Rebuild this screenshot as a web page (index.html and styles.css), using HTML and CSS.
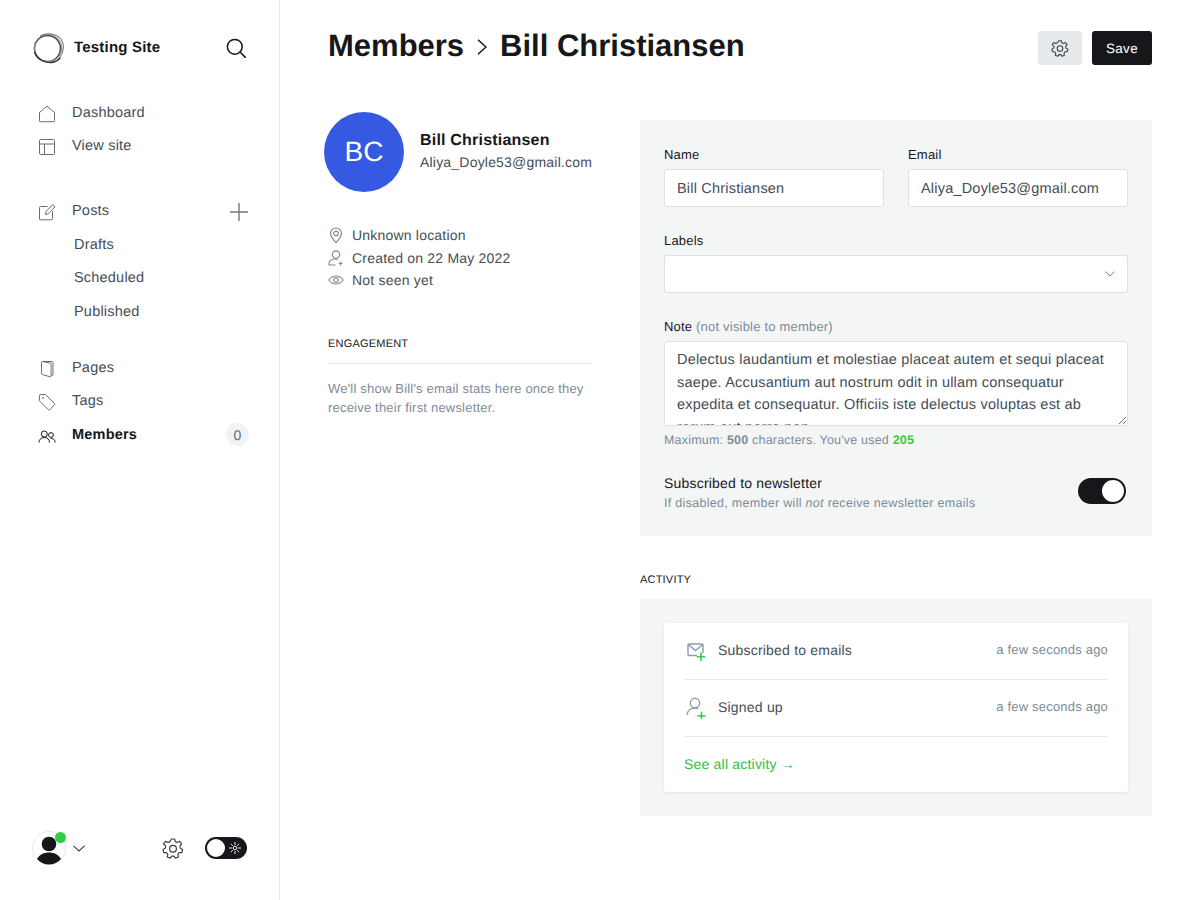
FILE: index.html
```html
<!DOCTYPE html>
<html lang="en">
<head>
    <meta charset="UTF-8">
    <meta name="viewport" content="width=device-width, initial-scale=1.0">
    <title>Members - Bill Christiansen</title>
    <link rel="stylesheet" href="styles.css">
</head>
<body>
    <div class="app">
        <aside class="sidebar">
            <div>
                <div class="brand">
                    <svg class="brand-logo" width="32" height="32" viewBox="0 0 32 32" fill="none">
                        <circle cx="15.500" cy="16.500" r="13" stroke="#4a4d50" stroke-width="1.600"/>
                        <circle cx="16" cy="16" r="13.800" stroke="#8d9093" stroke-width="1"/>
                        <path d="M8 4C14 0.500 24 1 29 7c3.500 5 3 13-1 18" stroke="#77797c" stroke-width="1.100"/>
                        <path d="M2.500 20c2 7 10 11 17 10.500 4-.5 7-2.500 9-5" stroke="#2f3235" stroke-width="1.300"/>
                    </svg>
                    <span class="brand-name">Testing Site</span>
                    <svg class="search-icon" width="20" height="20" viewBox="0 0 20 20" fill="none" stroke="#15171a" stroke-width="1.500">
                        <circle cx="8.800" cy="8.800" r="7.400"/>
                        <path d="M14 14l5.400 5.400" stroke-linecap="round"/>
                    </svg>
                </div>

                <nav class="nav-group nav-group-top">
                    <a class="nav-item">
                        <svg class="nav-icon" viewBox="0 0 18 18" fill="none"><path d="M1.500 7.500L9 1.200l7.500 6.300v8.300a.9.9 0 0 1-.9.9H2.400a.9.9 0 0 1-.9-.9z"/></svg>
                        Dashboard
                    </a>
                    <a class="nav-item">
                        <svg class="nav-icon" viewBox="0 0 18 18" fill="none"><rect x="1.500" y="1.500" width="15" height="15" rx="1"/><path d="M1.500 6h15M6.500 6v10.500"/></svg>
                        View site
                    </a>
                </nav>

                <nav class="nav-group nav-group-posts">
                    <a class="nav-item">
                        <svg class="nav-icon" viewBox="0 0 18 18" fill="none"><path d="M9.500 3.500H2.500a1 1 0 0 0-1 1v11.500a.8.800 0 0 0 .8.8h11.200a1 1 0 0 0 1-1V8.500"/><path d="M7.500 11.500l.6-3L14.600 1.600l2.400 2.200-6.600 7z"/></svg>
                        Posts
                        <svg class="plus-icon" width="18" height="18" viewBox="0 0 18 18" stroke="#6f7780" stroke-width="1.400"><path d="M9 0v18M0 9h18"/></svg>
                    </a>
                    <a class="nav-item nav-sub">Drafts</a>
                    <a class="nav-item nav-sub">Scheduled</a>
                    <a class="nav-item nav-sub">Published</a>
                </nav>

                <nav class="nav-group">
                    <a class="nav-item">
                        <svg class="nav-icon" viewBox="0 0 18 18" fill="none"><path d="M3.500 2.500a1 1 0 0 1 1-1h9.500a1 1 0 0 1 1 1v12a1 1 0 0 1-1 1h-.7"/><path d="M3.500 2.500v11a1 1 0 0 0 .8 1l7.800 2.300a.7.700 0 0 0 1-.7V4.200a1 1 0 0 0-.7-1L4.500 1.500"/></svg>
                        Pages
                    </a>
                    <a class="nav-item">
                        <svg class="nav-icon" viewBox="0 0 18 18" fill="none"><path d="M1.500 2.500a1 1 0 0 1 1-1h5l9 9a1 1 0 0 1 0 1.400l-4.800 4.800a1 1 0 0 1-1.400 0l-9-9z"/><circle cx="5" cy="5" r=".5"/></svg>
                        Tags
                    </a>
                    <a class="nav-item nav-active">
                        <svg class="nav-icon nav-icon-dark" viewBox="0 0 18 18" fill="none"><circle cx="6.300" cy="7" r="3"/><path d="M1 15.500c0-3 2.300-5 5.300-5s5.200 2 5.200 5"/><circle cx="13" cy="8" r="2.400"/><path d="M12.800 11.500c2.500-.3 4.300 1.300 4.400 4"/></svg>
                        Members
                        <span class="count-badge">0</span>
                    </a>
                </nav>
            </div>

            <div class="sidebar-footer">
                <div class="user-menu">
                    <div class="user-avatar">
                        <svg width="34" height="34" viewBox="0 0 34 34">
                            <circle cx="17" cy="13" r="7.300" fill="#15171a"/>
                            <path d="M5 28c2.500-4.500 7-6.500 12-6.500S26.500 23.500 29 28c-3 3.500-7 5.500-12 5.500S8 31.500 5 28z" fill="#15171a"/>
                        </svg>
                        <span class="user-dot"></span>
                    </div>
                    <svg width="12" height="7" viewBox="0 0 12 7" fill="none" stroke="#394047" stroke-width="1.100"><path d="M.5 .8L6 6l5.500-5.200"/></svg>
                </div>
                <div class="footer-actions">
                    <svg class="gear" width="22" height="22" viewBox="0 0 24 24" fill="none" stroke="#394047" stroke-width="1.300" stroke-linejoin="round">
                        <path d="M10.300 2.200h3.400l.7 2.800 2.200 1 2.600-1.300 2.200 2.800-1.800 2.300.4 2.400 2.500 1.400-.8 3.400-2.900.1-1.500 1.900.6 2.800-3.200 1.300-1.700-2.300h-2.400l-1.700 2.300-3.200-1.300.6-2.800-1.500-1.900-2.900-.1-.8-3.400 2.500-1.400.4-2.400L1.600 7.500l2.200-2.800 2.600 1.300 2.200-1z"/>
                        <circle cx="12" cy="12.800" r="3.700"/>
                    </svg>
                    <div class="theme-toggle">
                        <span class="theme-knob"></span>
                        <svg width="12" height="12" viewBox="0 0 12 12" stroke="#e6e8eb" stroke-width="1" fill="none"><circle cx="6" cy="6" r="1.800"/><path d="M6 0v3M6 9v3M0 6h3M9 6h3M1.800 1.800l2 2M8.200 8.200l2 2M1.800 10.200l2-2M8.200 3.800l2-2"/></svg>
                    </div>
                </div>
            </div>
        </aside>

        <main class="main">
            <header class="page-header">
                <h1 class="page-title">
                    Members
                    <svg width="10" height="16" viewBox="0 0 10 16" fill="none" stroke="#15171a" stroke-width="1.500"><path d="M1 .8L9 8l-8 7.200"/></svg>
                    Bill Christiansen
                </h1>
                <div class="header-actions">
                    <button class="btn btn-settings">
                        <svg width="18" height="18" viewBox="0 0 24 24" fill="none" stroke="#394047" stroke-width="1.400" stroke-linejoin="round">
                            <path d="M10.300 2.200h3.400l.7 2.800 2.200 1 2.600-1.300 2.200 2.800-1.800 2.300.4 2.400 2.500 1.400-.8 3.400-2.900.1-1.500 1.900.6 2.800-3.200 1.300-1.700-2.300h-2.400l-1.700 2.300-3.200-1.300.6-2.800-1.500-1.900-2.900-.1-.8-3.400 2.500-1.400.4-2.400L1.600 7.500l2.200-2.800 2.600 1.300 2.200-1z"/>
                            <circle cx="12" cy="12.800" r="3.700"/>
                        </svg>
                    </button>
                    <button class="btn btn-save">Save</button>
                </div>
            </header>

            <div class="columns">
                <section class="profile">
                    <div class="profile-head">
                        <div class="profile-avatar">BC</div>
                        <div>
                            <div class="profile-name">Bill Christiansen</div>
                            <div class="profile-email">Aliya_Doyle53@gmail.com</div>
                        </div>
                    </div>

                    <ul class="meta-list">
                        <li>
                            <svg class="meta-icon" viewBox="0 0 16 16" fill="none"><path d="M8 15.500C5 12.500 2.500 9.500 2.500 6.500a5.500 5.500 0 0 1 11 0c0 3-2.500 6-5.500 9z"/><circle cx="8" cy="6.500" r="2.300"/></svg>
                            Unknown location
                        </li>
                        <li>
                            <svg class="meta-icon" viewBox="0 0 16 16" fill="none"><circle cx="8" cy="4.500" r="3.700"/><path d="M1 15c-.5-3.500 2-6 5.500-6 1.200 0 2.300.2 3.300 .8M1 15h6.500M12.500 11.500v4M10.500 13.500h4"/></svg>
                            Created on 22 May 2022
                        </li>
                        <li>
                            <svg class="meta-icon" viewBox="0 0 16 16" fill="none"><path d="M.8 8C2.800 5.300 5.300 4 8 4s5.200 1.300 7.200 4c-2 2.700-4.500 4-7.200 4S2.800 10.700 .8 8z"/><circle cx="8" cy="8" r="2.200"/></svg>
                            Not seen yet
                        </li>
                    </ul>

                    <h4 class="section-heading engagement-heading">ENGAGEMENT</h4>
                    <p class="engagement-text">We'll show Bill's email stats here once they receive their first newsletter.</p>
                </section>

                <section class="details">
                    <div class="form-panel">
                        <div class="form-row">
                            <div class="field">
                                <label class="field-label">Name</label>
                                <input class="text-input" type="text" value="Bill Christiansen">
                            </div>
                            <div class="field">
                                <label class="field-label">Email</label>
                                <input class="text-input" type="text" value="Aliya_Doyle53@gmail.com">
                            </div>
                        </div>

                        <div class="field field-labels">
                            <label class="field-label">Labels</label>
                            <div class="select-input">
                                <svg width="10" height="6" viewBox="0 0 10 6" fill="none" stroke="#7c8b9a" stroke-width="1"><path d="M.5 .5L5 5 9.500 .5"/></svg>
                            </div>
                        </div>

                        <div class="field field-note">
                            <label class="field-label">Note <span class="label-hint">(not visible to member)</span></label>
                            <textarea class="note-input">Delectus laudantium et molestiae placeat autem et sequi placeat saepe. Accusantium aut nostrum odit in ullam consequatur expedita et consequatur. Officiis iste delectus voluptas est ab rerum aut porro non.</textarea>
                            <p class="note-count">Maximum: <b>500</b> characters. You've used <b class="count-used">205</b></p>
                        </div>

                        <div class="subscribe-row">
                            <div>
                                <div class="subscribe-title">Subscribed to newsletter</div>
                                <div class="subscribe-desc">If disabled, member will <em>not</em> receive newsletter emails</div>
                            </div>
                            <div class="switch"><span class="switch-knob"></span></div>
                        </div>
                    </div>

                    <h4 class="section-heading activity-heading">ACTIVITY</h4>
                    <div class="activity-panel">
                        <div class="activity-card">
                            <div class="activity-row">
                                <svg class="activity-icon" width="22" height="22" viewBox="0 0 22 22" fill="none">
                                    <path d="M13 12.500H5a1 1 0 0 1-1-1V2a1 1 0 0 1 1-1h13a1 1 0 0 1 1 1v8M4.300 1.500l7.200 6 7.200-6" stroke="#8e9cac" stroke-width="1.400"/>
                                    <path d="M17 9.500v8.600M12.700 13.700h8.600" stroke="#30cf43" stroke-width="1.600"/>
                                </svg>
                                <span class="activity-label">Subscribed to emails</span>
                                <span class="activity-time">a few seconds ago</span>
                            </div>
                            <div class="activity-row">
                                <svg class="activity-icon activity-icon-person" width="22" height="22" viewBox="0 0 22 22" fill="none">
                                    <circle cx="11" cy="6" r="4.700" stroke="#8e9cac" stroke-width="1.400"/>
                                    <path d="M3.200 18c0-4 3-7 7.800-7 1.300 0 2.300.2 3.200.6" stroke="#8e9cac" stroke-width="1.400"/>
                                    <path d="M17.500 14.700v7.300M13.200 19h8.400" stroke="#30cf43" stroke-width="1.600"/>
                                </svg>
                                <span class="activity-label">Signed up</span>
                                <span class="activity-time">a few seconds ago</span>
                            </div>
                            <a class="activity-link">See all activity &rarr;</a>
                        </div>
                    </div>
                </section>
            </div>
        </main>
    </div>
</body>
</html>
```

FILE: styles.css
```css
* {
    box-sizing: border-box;
}

body {
    margin: 0;
    font-family: "Liberation Sans", Arial, sans-serif;
    color: #15171a;
    background-color: #ffffff;
    letter-spacing: 0.2px;
    text-rendering: geometricPrecision;
}

.app {
    display: flex;
    height: 900px;
    overflow: hidden;
}

/* sidebar */
.sidebar {
    width: 280px;
    flex-shrink: 0;
    border-right: 1px solid #e6e8eb;
    padding: 32px 32px 35px 32px;
    display: flex;
    flex-direction: column;
    justify-content: space-between;
}

.brand {
    display: flex;
    align-items: center;
    height: 32px;
    margin-bottom: 32.200px;
}

.brand-logo {
    margin-right: 10px;
}

.brand-name {
    font-size: 15px;
    font-weight: bold;
    flex: 1;
    margin-top: -1px;
}

.search-icon {
    margin-right: 1px;
}

.nav-group {
    padding-left: 6px;
}

.nav-group-top {
    margin-bottom: 31.500px;
}

.nav-group-posts {
    margin-bottom: 22.500px;
}

.nav-item {
    display: flex;
    align-items: center;
    height: 33.500px;
    font-size: 14.500px;
    color: #464d54;
}

.nav-icon {
    width: 18px;
    height: 18px;
    margin-right: 16px;
    margin-top: 2px;
    stroke: #626d79;
    stroke-width: 1;
}

.nav-icon-dark {
    stroke: #15171a;
}

.nav-sub {
    padding-left: 36px;
}

.nav-active {
    font-weight: bold;
    color: #15171a;
}

.plus-icon {
    margin-left: auto;
    margin-right: -1px;
    margin-top: 2px;
}

.count-badge {
    margin-left: auto;
    margin-right: -2px;
    width: 23px;
    height: 23px;
    border-radius: 50%;
    background-color: #f1f3f4;
    color: #626d79;
    font-size: 14px;
    font-weight: normal;
    display: flex;
    align-items: center;
    justify-content: center;
}

.sidebar-footer {
    display: flex;
    align-items: center;
    justify-content: space-between;
}

.user-menu {
    display: flex;
    align-items: center;
    gap: 7px;
}

.user-avatar {
    position: relative;
    width: 34px;
    height: 34px;
    border: 1px solid #e6e8eb;
    border-radius: 50%;
    overflow: visible;
}

.user-avatar svg {
    display: block;
    margin: -1px;
    border-radius: 50%;
}

.user-dot {
    position: absolute;
    top: 0;
    right: -1px;
    width: 11px;
    height: 11px;
    border-radius: 50%;
    background-color: #30cf43;
}

.footer-actions {
    display: flex;
    align-items: center;
    gap: 21px;
}

.theme-toggle {
    width: 42px;
    height: 22px;
    border-radius: 11px;
    background-color: #15171a;
    display: flex;
    align-items: center;
    justify-content: space-between;
    padding: 0 6px 0 2px;
}

.theme-knob {
    width: 18px;
    height: 18px;
    border-radius: 50%;
    background-color: #ffffff;
}

/* main */
.main {
    flex: 1;
    padding: 0 48px;
}

.page-header {
    display: flex;
    justify-content: space-between;
    align-items: flex-start;
    padding-top: 27px;
    height: 112px;
}

.page-title {
    margin: 0;
    font-size: 31px;
    line-height: 37px;
    font-weight: bold;
    letter-spacing: 0;
    display: flex;
    align-items: center;
    gap: 13px;
}

.page-title svg {
    margin-top: 3px;
}

.header-actions {
    display: flex;
    gap: 10px;
    padding-top: 4px;
}

.btn {
    height: 34px;
    border: none;
    border-radius: 3px;
    font-family: inherit;
    font-size: 13.500px;
    letter-spacing: 0.300px;
    text-rendering: geometricPrecision;
    cursor: pointer;
    display: flex;
    align-items: center;
    justify-content: center;
}

.btn-settings {
    width: 44px;
    background-color: #e6e9eb;
}

.btn-save {
    width: 60px;
    background-color: #15171a;
    color: #ffffff;
}

.columns {
    display: grid;
    grid-template-columns: 264px 512px;
    gap: 48px;
}

/* left column */
.profile-head {
    display: flex;
    align-items: center;
    gap: 16px;
    margin-left: -4px;
    margin-right: -10px;
}

.profile-avatar {
    width: 80px;
    height: 80px;
    flex-shrink: 0;
    border-radius: 50%;
    background-color: #3559e0;
    color: #ffffff;
    font-size: 28px;
    letter-spacing: 0;
    display: flex;
    align-items: center;
    justify-content: center;
}

.profile-name {
    font-size: 16px;
    font-weight: bold;
    line-height: 20px;
    margin-top: -2px;
    margin-bottom: 2px;
}

.profile-email {
    font-size: 14px;
    line-height: 18px;
    color: #464d54;
}

.meta-list {
    list-style: none;
    margin: 32px 0 0;
    padding: 0;
}

.meta-list li {
    display: flex;
    align-items: center;
    height: 22.500px;
    font-size: 14px;
    color: #464d54;
}

.meta-icon {
    width: 16px;
    height: 16px;
    margin-right: 8px;
    flex-shrink: 0;
    stroke: #7c8b9a;
    stroke-width: 1.200;
}

.section-heading {
    margin: 0;
    font-size: 11px;
    line-height: 14px;
    font-weight: normal;
    color: #15171a;
}

.engagement-heading {
    margin-top: 45px;
    padding-bottom: 12px;
    border-bottom: 1px solid #e6e8eb;
}

.engagement-text {
    margin: 15px 0 0;
    font-size: 13px;
    line-height: 19px;
    color: #7c8b9a;
}

/* right column */
.details {
    padding-top: 8px;
}

.form-panel {
    background-color: #f4f6f6;
    border-radius: 3px;
    padding: 24px;
    height: 416px;
}

.form-row {
    display: grid;
    grid-template-columns: 220px 220px;
    gap: 24px;
}

.field {
    margin-bottom: 23px;
}

.field-labels {
    margin-bottom: 24px;
}

.field-label {
    display: block;
    font-size: 13px;
    line-height: 20px;
    margin-top: 1px;
    margin-bottom: 4px;
    color: #15171a;
}

.label-hint {
    color: #7c8b9a;
}

.text-input {
    width: 100%;
    height: 38px;
    border: 1px solid #dde1e5;
    border-radius: 3px;
    background-color: #ffffff;
    padding: 2px 12px 0;
    font-family: inherit;
    font-size: 14.500px;
    letter-spacing: 0.200px;
    text-rendering: geometricPrecision;
    color: #464d54;
    outline: none;
}

.select-input {
    height: 38px;
    border: 1px solid #dde1e5;
    border-radius: 3px;
    background-color: #ffffff;
    display: flex;
    align-items: center;
    justify-content: flex-end;
    padding-right: 12px;
}

.field-note {
    margin-bottom: 0;
}

.note-input {
    display: block;
    width: 100%;
    height: 85px;
    margin: 0;
    border: 1px solid #dde1e5;
    border-radius: 3px;
    background-color: #ffffff;
    padding: 7px 12px 5px;
    font-family: inherit;
    font-size: 14.500px;
    line-height: 22.500px;
    letter-spacing: 0.200px;
    text-rendering: geometricPrecision;
    color: #464d54;
    overflow: hidden;
    outline: none;
}

.note-count {
    margin: 6px 0 0;
    font-size: 12.500px;
    line-height: 16px;
    color: #7c8b9a;
}

.count-used {
    color: #30cf43;
}

.subscribe-row {
    display: flex;
    align-items: flex-start;
    justify-content: space-between;
    margin-top: 25px;
}

.subscribe-title {
    font-size: 14px;
    line-height: 20px;
    color: #15171a;
}

.subscribe-desc {
    font-size: 12.500px;
    letter-spacing: 0.300px;
    line-height: 18px;
    margin-top: 1px;
    color: #7c8b9a;
}

.switch {
    width: 48px;
    height: 26px;
    margin-top: 5px;
    margin-right: 2px;
    border-radius: 13px;
    background-color: #15171a;
    display: flex;
    align-items: center;
    justify-content: flex-end;
    padding: 0 2px;
}

.switch-knob {
    width: 22px;
    height: 22px;
    border-radius: 50%;
    background-color: #ffffff;
}

.activity-heading {
    margin-top: 37px;
    margin-bottom: 12px;
}

.activity-panel {
    background-color: #f4f6f6;
    border-radius: 3px;
    padding: 24px;
    height: 217px;
}

.activity-card {
    background-color: #ffffff;
    border-radius: 3px;
    box-shadow: 0 1px 3px rgba(0, 0, 0, 0.08);
    padding: 0 20px;
    height: 169px;
}

.activity-row {
    display: flex;
    align-items: center;
    height: 57px;
    padding-bottom: 2px;
    border-bottom: 1px solid #e6e8eb;
}

.activity-icon {
    margin-right: 12px;
    margin-top: 7px;
    flex-shrink: 0;
}

.activity-icon-person {
    margin-top: 1px;
}

.activity-label {
    font-size: 14px;
    color: #464d54;
    flex: 1;
}

.activity-time {
    font-size: 13px;
    margin-top: -1px;
    color: #7c8b9a;
}

.activity-link {
    display: block;
    margin-top: 18px;
    font-size: 14px;
    line-height: 18px;
    color: #30c13f;
}
```
